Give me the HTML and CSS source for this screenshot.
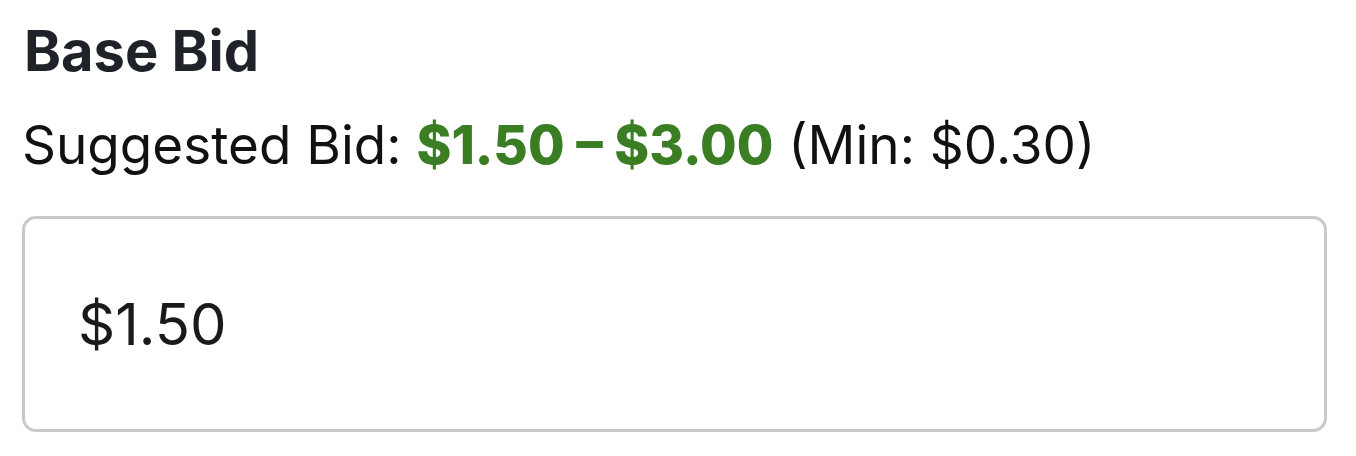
FILE: index.html
```html
<!DOCTYPE html>
<html>
<head>
<meta charset="utf-8">
<link rel="stylesheet" href="styles.css">
</head>
<body>
<div class="bid">
  <h2 class="bid-title">Base Bid</h2>
  <p class="bid-hint">Suggested Bid: <strong class="bid-range">$1.50 – $3.00</strong> (Min: $0.30)</p>
  <div class="bid-input"><span class="bid-value">$1.50</span></div>
</div>
</body>
</html>
```
FILE: styles.css
```css
html, body {
  margin: 0;
  padding: 0;
  background: #ffffff;
}
body {
  font-family: Inter, "Noto Sans", sans-serif;
  color: #111;
}
.bid {
  padding: 18px 29px 0 22px;
  display: flex;
  flex-direction: column;
}
.bid-title {
  margin: 0 0 0 2px;
  font-size: 56px;
  line-height: 66px;
  font-weight: 700;
  color: #1f2329;
}
.bid-hint {
  margin: 30px 0 0 0;
  font-size: 53px;
  line-height: 62px;
  font-weight: 400;
  color: #111;
}
.bid-range {
  font-weight: 800;
  color: #3a7d22;
}
.bid-input {
  margin-top: 40px;
  height: 216px;
  border: 3px solid #c9c9c9;
  border-radius: 14px;
  display: flex;
  align-items: center;
  padding: 0 53px;
  box-sizing: border-box;
}
.bid-value {
  font-size: 58px;
  font-weight: 400;
  color: #1a1a1a;
}
```
